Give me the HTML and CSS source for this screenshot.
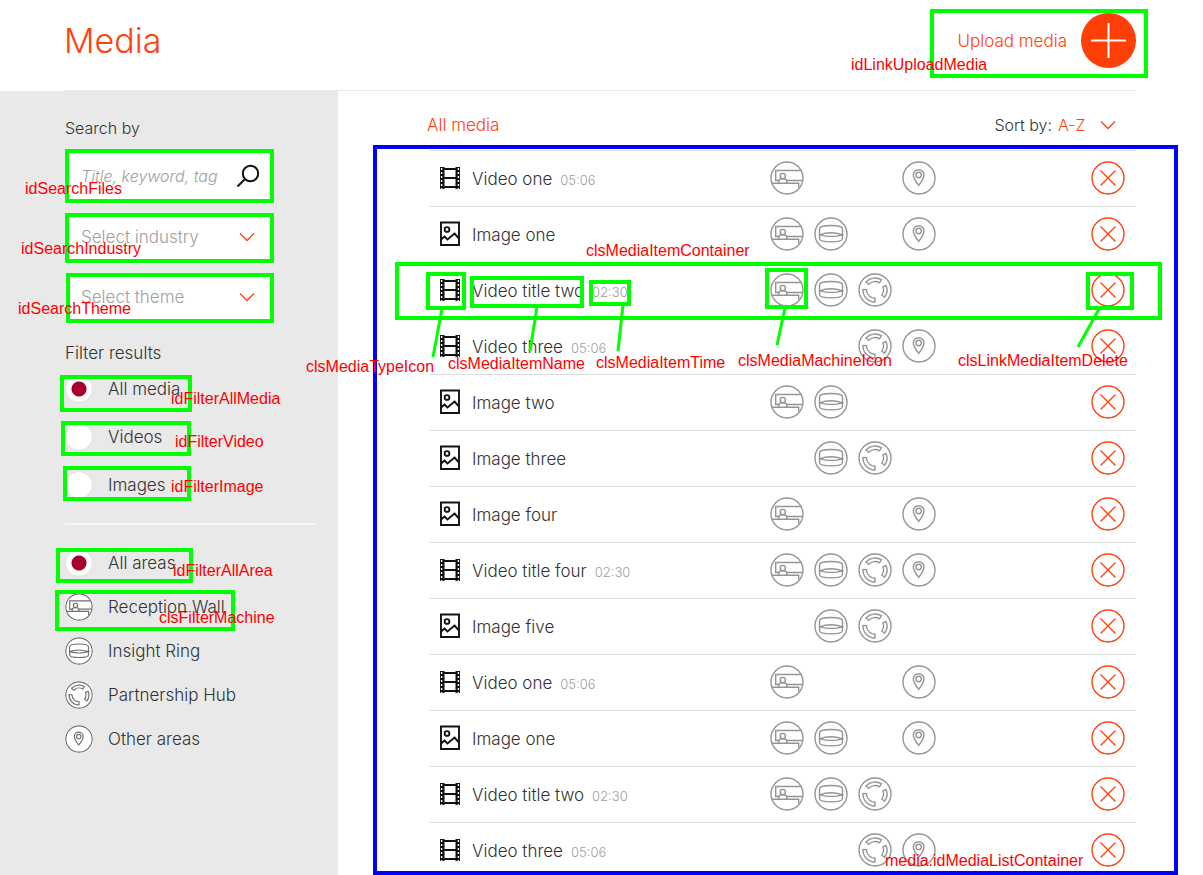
FILE: index.html
```html
<!DOCTYPE html>
<html lang="en">
<head>
<meta charset="utf-8">
<title>Media</title>
<link rel="stylesheet" href="styles.css">
</head>
<body>
<svg class="sprite" aria-hidden="true">
  <symbol id="wall" viewBox="0 0 34 34">
    <circle cx="17" cy="17" r="16"/>
    <path d="M9 19.5H5.7V9.5H31.2M17 19.5H32.5M1.8 22.3H28.7V26.8M8.8 22V20.2Q8.8 17.8 12.8 17.8T16.8 20.2V22"/>
    <circle cx="12.8" cy="15" r="2.6"/>
  </symbol>
  <symbol id="ring" viewBox="0 0 34 34">
    <circle cx="17" cy="17" r="16"/>
    <path d="M5.5 12C5.5 7.4 28.5 7.4 28.5 12V21.5C28.5 26 5.5 26 5.5 21.5ZM5.5 17.8Q17 13.8 28.5 17.8Q17 21 5.5 17.8"/>
  </symbol>
  <symbol id="hub" viewBox="0 0 34 34">
    <circle cx="17" cy="17" r="16"/>
    <path d="M8.1 9A12 12 0 0 1 23.4 6.8L21.5 9.8A8.5 8.5 0 0 0 10.7 11.3ZM28.1 12.5A12 12 0 0 1 26.6 24.2L23.8 22.1A8.5 8.5 0 0 0 24.9 13.8ZM17 29A12 12 0 0 1 5 16.4L8.5 16.6A8.5 8.5 0 0 0 17 25.2Z"/>
  </symbol>
  <symbol id="pin" viewBox="0 0 34 34">
    <circle cx="17" cy="17" r="16"/>
    <path d="M16.7 24.3C13 19.6 11.4 17 11.4 14A5.3 5.3 0 0 1 22 14C22 17 20.4 19.6 16.7 24.3Z"/>
    <circle cx="16.7" cy="14" r="2.7"/>
  </symbol>
  <symbol id="remove" viewBox="0 0 34 34">
    <circle cx="17" cy="17" r="16"/>
    <path d="M9.5 9.5L24.5 24.5M24.5 9.5L9.5 24.5"/>
  </symbol>
  <symbol id="film" viewBox="0 0 20 24">
    <path d="M0 1H4.5V23H0ZM15.5 1H20V23H15.5Z" fill="#111" stroke="none"/>
    <path d="M4 3H16M4 12H16M4 21H16" stroke="#111" stroke-width="2"/>
    <path d="M1.6 2V23M18.4 2V23" stroke="#fff" stroke-width="1.4" stroke-dasharray="2 2"/>
  </symbol>
  <symbol id="image" viewBox="0 0 20 26">
    <path d="M1 1.5H19V24H1ZM1 18.5L4.5 15.5L7.5 18.5L14.5 12.5L19 17.5" stroke="#111" stroke-width="1.9"/>
    <circle cx="7" cy="8.5" r="2.4" stroke="#111" stroke-width="1.9"/>
  </symbol>
  <symbol id="chevron" viewBox="0 0 16 10"><path d="M1 1.5L8 8.5L15 1.5"/></symbol>
</svg>

<div class="page">
  <header class="top">
    <h1 class="title">Media</h1>
    <a class="upload" href="#upload">Upload media
      <svg class="plus" viewBox="0 0 55 55" aria-hidden="true"><circle cx="27.5" cy="27.5" r="27.5"/><path d="M27.5 10V45M10 27.5H45"/></svg>
    </a>
  </header>

  <div class="body">
    <aside class="side">
      <h2 class="side-title">Search by</h2>
      <div class="fields">
        <label class="field field-search">
          <input class="control" type="text" placeholder="Title, keyword, tag" aria-label="Title, keyword, tag">
          <svg class="glass" viewBox="0 0 24 24" aria-hidden="true"><circle cx="14.5" cy="9.5" r="7.7"/><path d="M9 15L1.5 22.5"/></svg>
        </label>
        <label class="field">
          <select class="control" aria-label="Select industry"><option>Select industry</option></select>
          <svg class="chevron" aria-hidden="true"><use href="#chevron"/></svg>
        </label>
        <label class="field">
          <select class="control" aria-label="Select theme"><option>Select theme</option></select>
          <svg class="chevron" aria-hidden="true"><use href="#chevron"/></svg>
        </label>
      </div>
      <h2 class="side-title side-title-filter">Filter results</h2>
      <div class="filters filters-media">
        <label class="filter"><input class="radio" type="radio" name="media" checked>All media</label>
        <label class="filter"><input class="radio" type="radio" name="media">Videos</label>
        <label class="filter"><input class="radio" type="radio" name="media">Images</label>
      </div>
      <div class="filters filters-area">
        <label class="filter"><input class="radio" type="radio" name="area" checked>All areas</label>
        <label class="filter"><input class="hidden-radio" type="radio" name="area"><svg class="area-icon" aria-hidden="true"><use href="#wall"/></svg>Reception Wall</label>
        <label class="filter"><input class="hidden-radio" type="radio" name="area"><svg class="area-icon" aria-hidden="true"><use href="#ring"/></svg>Insight Ring</label>
        <label class="filter"><input class="hidden-radio" type="radio" name="area"><svg class="area-icon" aria-hidden="true"><use href="#hub"/></svg>Partnership Hub</label>
        <label class="filter"><input class="hidden-radio" type="radio" name="area"><svg class="area-icon" aria-hidden="true"><use href="#pin"/></svg>Other areas</label>
      </div>
    </aside>

    <main class="main">
      <div class="list-head">
        <h2 class="list-title">All media</h2>
        <label class="sort">Sort by:
          <select class="sort-select"><option>A-Z</option><option>Z-A</option></select>
          <svg class="chevron" aria-hidden="true"><use href="#chevron"/></svg>
        </label>
      </div>
      <ul class="list" id="list"></ul>
    </main>
  </div>

  <svg class="notes" aria-label="Element names">
    <g class="frames">
      <rect x="932" y="11" width="214" height="65"/>
      <rect x="67" y="151" width="205" height="50"/>
      <rect x="67" y="215" width="205" height="46"/>
      <rect x="68" y="275" width="204" height="46"/>
      <rect x="62" y="377" width="128" height="33"/>
      <rect x="63" y="423" width="126" height="31"/>
      <rect x="65" y="468" width="124" height="31"/>
      <rect x="58" y="550" width="133" height="31"/>
      <rect x="57" y="592" width="176" height="37"/>
      <rect x="397" y="264" width="763" height="54"/>
      <rect x="428" y="274" width="36" height="34"/>
      <rect x="472" y="278" width="110" height="28"/>
      <rect x="591" y="282" width="38" height="22"/>
      <rect x="767" y="270" width="39" height="37"/>
      <rect x="1088" y="274" width="44" height="34"/>
      <path class="leads" d="M442 309L433 357M537 307L530 351M623 305L618 351M785 308L777 345M1099 309L1078 347"/>
      <rect class="frame-list" x="375" y="147" width="801" height="726"/>
    </g>
    <g class="names">
      <text x="851" y="70">idLinkUploadMedia</text>
      <text x="25" y="194">idSearchFiles</text>
      <text x="21" y="254">idSearchIndustry</text>
      <text x="18" y="314">idSearchTheme</text>
      <text x="171" y="404">idFilterAllMedia</text>
      <text x="175" y="447">idFilterVideo</text>
      <text x="171" y="492">idFilterImage</text>
      <text x="173" y="576">idFilterAllArea</text>
      <text x="159" y="623">clsFilterMachine</text>
      <text x="586" y="256">clsMediaItemContainer</text>
      <text x="306" y="372">clsMediaTypeIcon</text>
      <text x="448" y="369">clsMediaItemName</text>
      <text x="596" y="368">clsMediaItemTime</text>
      <text x="738" y="366">clsMediaMachineIcon</text>
      <text x="958" y="366">clsLinkMediaItemDelete</text>
      <text x="885" y="866">media.idMediaListContainer</text>
    </g>
  </svg>
</div>
<script src="list.js"></script>
</body>
</html>
```

FILE: list.js
```js
const items = [
  ["film", "Video one", "05:06", ["wall", "", "", "pin"]],
  ["image", "Image one", "", ["wall", "ring", "", "pin"]],
  ["film", "Video title two", "02:30", ["wall", "ring", "hub", ""]],
  ["film", "Video three", "05:06", ["", "", "hub", "pin"]],
  ["image", "Image two", "", ["wall", "ring", "", ""]],
  ["image", "Image three", "", ["", "ring", "hub", ""]],
  ["image", "Image four", "", ["wall", "", "", "pin"]],
  ["film", "Video title four", "02:30", ["wall", "ring", "hub", "pin"]],
  ["image", "Image five", "", ["", "ring", "hub", ""]],
  ["film", "Video one", "05:06", ["wall", "", "", "pin"]],
  ["image", "Image one", "", ["wall", "ring", "", "pin"]],
  ["film", "Video title two", "02:30", ["wall", "ring", "hub", ""]],
  ["film", "Video three", "05:06", ["", "", "hub", "pin"]]
];
const icon = (name, cls) => `<svg class="${cls}" aria-hidden="true"><use href="#${name}"/></svg>`;
document.getElementById("list").innerHTML = items.map(([type, name, time, areas]) => `
  <li class="item">
    ${icon(type, "type type-" + type)}
    <span class="name">${name}${time ? `<span class="time">${time}</span>` : ""}</span>
    <span class="machines">${areas.map(a => a ? icon(a, "machine") : "<span></span>").join("")}</span>
    <button class="delete" type="button" aria-label="Delete ${name}">${icon("remove", "machine")}</button>
  </li>`).join("");
```

FILE: styles.css
```css
* { box-sizing: border-box; }
body {
  margin: 0;
  background: #fff;
  color: #333;
  font: 300 17px/24px Inter, "Liberation Sans", sans-serif;
}
h1, h2, ul { margin: 0; padding: 0; font-weight: 300; }
h2 { font-size: 17px; }
svg { display: block; fill: none; }
.sprite { position: absolute; width: 0; height: 0; }

.page {
  position: relative;
  display: flex;
  flex-direction: column;
  height: 100vh;
  overflow: hidden;
}

.top {
  display: flex;
  align-items: center;
  justify-content: space-between;
  flex: none;
  margin: 0 67px 0 64px;
  padding: 13px 0 22px;
  border-bottom: 1px solid #e9e9e9;
}
.title { color: #ff4010; font-size: 34px; line-height: 44px; }
.upload {
  display: flex;
  align-items: center;
  gap: 14px;
  color: #ff4010;
  text-decoration: none;
}
.plus { width: 55px; height: 55px; fill: #ff3f08; stroke: none; }
.plus path { stroke: #fff; stroke-width: 2; }

.body { display: flex; flex: 1; min-height: 0; }
.side {
  flex: none;
  width: 338px;
  padding: 25px 22px 0 65px;
  background: #e9e9e9;
}
.side-title { font-size: 16px; }
.fields {
  display: grid;
  grid-template-columns: minmax(0, 208px);
  gap: 10px;
  margin-top: 10px;
}
.field {
  display: flex;
  align-items: center;
  height: 50px;
  padding: 0 18px 4px 16px;
  background: #fff;
}
.field-search { height: 54px; padding: 0 13px 2px 16px; }
.control {
  flex: 1;
  min-width: 0;
  padding: 0;
  border: 0;
  background: none;
  color: #a0a0a0;
  font: inherit;
  appearance: none;
  outline: 0;
}
.field-search .control { font-size: 16px; }
.control::placeholder { color: #a0a0a0; font-style: italic; opacity: 1; }
.glass { flex: none; width: 24px; height: 24px; stroke: #111; stroke-width: 2; }
.chevron { flex: none; width: 16px; height: 10px; stroke: #ff4010; stroke-width: 1.3; }
.side-title-filter { margin-top: 17px; font-size: 17px; }

.filters { display: grid; }
.filters-media {
  grid-auto-rows: 48px;
  padding-bottom: 14px;
  border-bottom: 2px solid #f7f7f7;
}
.filters-area { grid-auto-rows: 44px; padding-top: 16px; }
.filter { display: flex; align-items: center; gap: 15px; }
.radio {
  appearance: none;
  width: 28px;
  height: 28px;
  margin: 0;
  border: 1px solid #e0e0e0;
  border-radius: 50%;
  background: #fff;
}
.radio:checked { background: radial-gradient(circle, #a8002f 7px, #fff 8px); }
.hidden-radio { position: absolute; opacity: 0; }
.area-icon {
  width: 28px;
  height: 28px;
  border-radius: 50%;
  background: #fff;
  stroke: #707070;
  stroke-width: 1.4;
}

.main { flex: 1; min-width: 0; padding: 22px 67px 0 89px; }
.list-head {
  display: flex;
  align-items: center;
  justify-content: space-between;
  padding: 0 20px 13px 0;
}
.list-title { color: #ff4010; }
.sort { display: flex; align-items: center; gap: 6px; font-size: 16px; }
.sort-select {
  appearance: none;
  width: 36px;
  padding: 0;
  border: 0;
  background: none;
  color: #ff4010;
  font: inherit;
}
.list { list-style: none; border-top: 1px solid #ddd; margin-left: 2px; }
.item {
  display: flex;
  align-items: center;
  height: 56px;
  padding: 0 11px 2px;
  border-bottom: 1px solid #ddd;
}
.type { flex: none; width: 20px; height: 24px; }
.type-image { height: 26px; }
.name { flex: 1; padding: 2px 0 0 12px; }
.time { margin-left: 8px; color: #a0a0a0; font-size: 13px; line-height: 16px; }
.machines {
  display: grid;
  grid-template-columns: repeat(4, 34px);
  gap: 10px;
  margin-right: 155px;
  stroke: #959595;
  stroke-width: 1.4;
}
.machine { width: 34px; height: 34px; }
.delete {
  padding: 0;
  border: 0;
  background: none;
  stroke: #ff4010;
  stroke-width: 1.4;
  cursor: pointer;
}

.notes {
  position: absolute;
  inset: 0;
  width: 100%;
  height: 100%;
  pointer-events: none;
}
.frames { stroke: #0f0; stroke-width: 4; }
.leads { stroke-width: 3; }
.frame-list { stroke: #00f; }
.names { fill: #f00; font: 400 16px "Liberation Sans", sans-serif; }
```
